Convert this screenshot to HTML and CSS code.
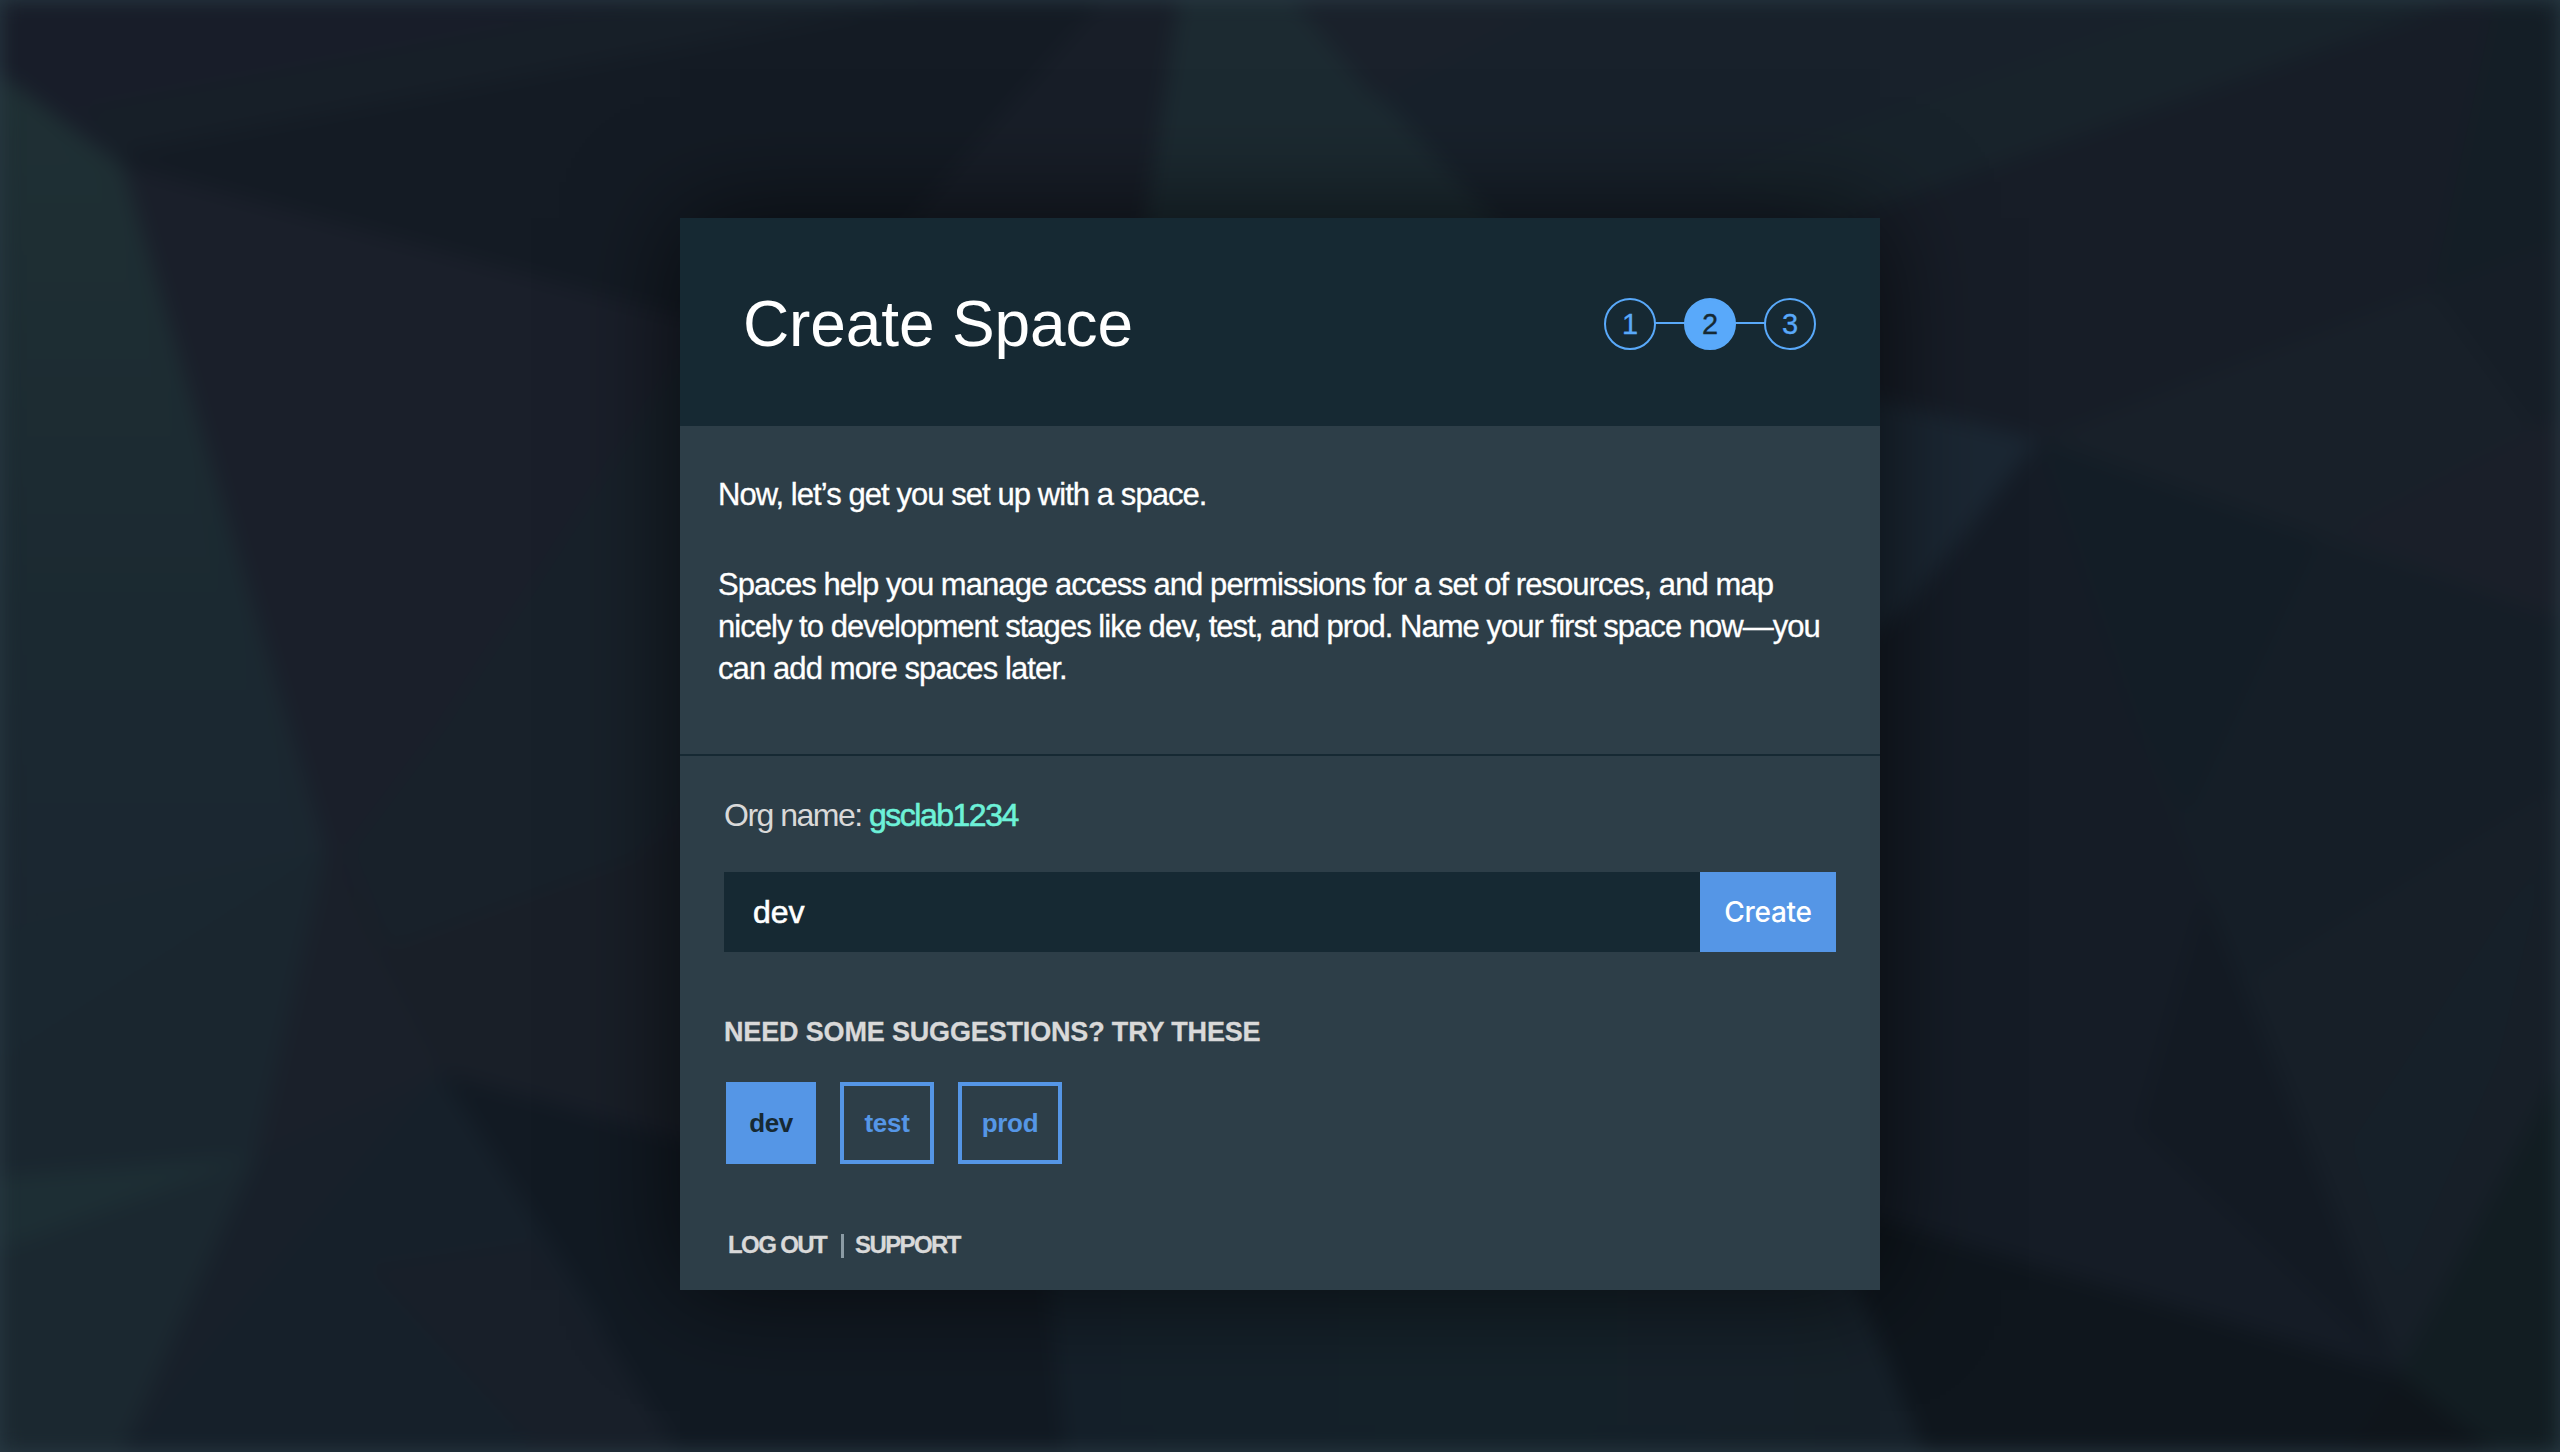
FILE: index.html
```html
<!DOCTYPE html>
<html lang="en">
<head>
<meta charset="utf-8">
<title>Create Space</title>
<link rel="stylesheet" href="styles.css">
</head>
<body>
<svg class="backdrop" viewBox="0 0 1568 889" preserveAspectRatio="none" aria-hidden="true">
  <defs>
    <linearGradient id="rim" x1="0" y1="0" x2="0" y2="1">
      <stop offset="0" stop-color="#1f3034"/><stop offset=".55" stop-color="#1b2931"/><stop offset="1" stop-color="#1b2530"/>
    </linearGradient>
    <linearGradient id="floor" x1="0" y1="0" x2="1" y2="0">
      <stop offset="0" stop-color="#15202a"/><stop offset=".5" stop-color="#15222a"/><stop offset="1" stop-color="#162029"/>
    </linearGradient>
  </defs>
  <rect width="1568" height="889" fill="#161e27"/>
  <polygon points="0,0 725,0 703,200 416,193 75,101 0,45" fill="#141b24"/>
  <polygon points="0,0 570,0 75,93 75,101 0,45" fill="#171f28"/>
  <polygon points="0,0 400,0 50,66 75,101 0,45" fill="#181d29"/>
  <polygon points="675,0 725,0 695,200 500,200" fill="#181e28"/>
  <polygon points="722,0 792,0 975,200 692,200" fill="#1c2a31"/>
  <polygon points="792,0 1508,0 1130,134 1130,200 975,200" fill="#18212b"/>
  <polygon points="792,0 960,0 842,60" fill="#1a212b"/>
  <polygon points="1508,0 1350,0 1040,110 1130,134" fill="#18232b"/>
  <polygon points="1508,0 1568,0 1568,147 1249,269 1130,240 1130,134" fill="#171d27"/>
  <polygon points="1528,0 1568,0 1568,147 1490,178" fill="#141e26"/>
  <polygon points="1249,269 1568,147 1568,380" fill="#182029"/>
  <polygon points="1489,177 1568,147 1568,285" fill="#161e27"/>
  <polygon points="1434,325 1568,255 1568,380" fill="#1a1f29"/>
  <polygon points="1130,240 1249,269 1168,372 1130,400" fill="#1b2733"/>
  <polygon points="1249,269 1568,380 1568,655 1469,841 1350,547 1309,444" fill="#151e27"/>
  <polygon points="1249,269 1420,330 1340,500 1309,444" fill="#131d26"/>
  <polygon points="1249,269 1309,444 1350,547 1469,841 1130,745 1130,400 1168,372" fill="#151c26"/>
  <polygon points="1377,600 1568,480 1568,655 1469,841" fill="#171f28"/>
  <polygon points="1440,700 1560,520 1530,650 1469,790" fill="#162029"/>
  <polygon points="1350,547 1310,690 1469,841" fill="#131a23"/>
  <polygon points="1568,655 1568,889 1529,889 1469,841" fill="#121d22"/>
  <polygon points="1130,740 1469,841 1439,889 1179,889 1130,770" fill="#0f161d"/>
  <polygon points="1469,841 1529,889 1439,889" fill="#0f151b"/>
  <polygon points="640,760 1125,760 1179,889 652,889" fill="url(#floor)"/>
  <polygon points="270,657 430,683 430,760 640,760 652,889 415,889" fill="#121a23"/>
  <polygon points="75,101 430,197 430,700 270,657 200,521" fill="#1a1f2a"/>
  <polygon points="416,220 430,220 430,480 270,657 213,521 270,445" fill="#18212a"/>
  <polygon points="200,521 240,580 430,510 430,690 270,657" fill="#191f28"/>
  <polygon points="0,45 75,101 200,521 0,650" fill="url(#rim)"/>
  <polygon points="0,570 200,521 0,650" fill="#1a2730"/>
  <polygon points="200,521 270,657 157,708 0,720 0,650" fill="#1a262f"/>
  <polygon points="200,521 270,657 157,708" fill="#1a202a"/>
  <polygon points="0,720 157,708 0,765" fill="#1d2e34"/>
  <polygon points="0,765 157,708 75,889 0,889" fill="#1b2830"/>
  <polygon points="157,708 270,657 415,889 75,889" fill="#18202a"/>
  <polygon points="195,745 270,657 370,812 340,889 75,889" fill="#16202a"/>
  <polygon points="225,775 330,889 415,889 330,760" fill="#181f29"/>
</svg>
<main class="card">
  <header class="card-header">
    <h1 class="title">Create Space</h1>
    <ol class="steps">
      <li class="step">1</li>
      <li class="step step-current">2</li>
      <li class="step">3</li>
    </ol>
  </header>
  <section class="intro">
    <p class="intro-text">Now, let’s get you set up with a space.</p>
    <p class="intro-text">Spaces help you manage access and permissions for a set of resources, and map <span class="tight">nicely to development stages like dev, test, and prod. Name your first space now—you</span> <span class="loose">can add more spaces later.</span></p>
  </section>
  <section class="form">
    <p class="org">Org name: <span class="org-name">gsclab1234</span></p>
    <div class="field">
      <input class="field-input" type="text" value="dev">
      <button class="field-button">Create</button>
    </div>
    <h2 class="hint">NEED SOME SUGGESTIONS? TRY THESE</h2>
    <div class="chips">
      <button class="chip chip-dev">dev</button>
      <button class="chip chip-test">test</button>
      <button class="chip chip-prod">prod</button>
    </div>
    <nav class="links">
      <a class="link">LOG OUT</a>
      <a class="link link-support">SUPPORT</a>
    </nav>
  </section>
</main>
</body>
</html>
```
FILE: styles.css
```css
* {
  box-sizing: border-box;
  margin: 0;
  padding: 0;
}

body {
  height: 1452px;
  overflow: hidden;
  background: #293a44;
  color: #fff;
  font-family: "Liberation Sans", Arial, sans-serif;
}

.backdrop {
  position: absolute;
  top: 0;
  left: 0;
  width: 2560px;
  height: 1452px;
  filter: blur(10px);
}

.card {
  position: relative;
  width: 1200px;
  height: 1072px;
  margin: 218px auto 0;
  background: #2d3e48;
  box-shadow: 0 0 100px rgba(0, 0, 0, .65);
}

.card-header {
  display: flex;
  align-items: center;
  justify-content: space-between;
  height: 208px;
  padding: 4px 64px 0 63px;
  background: #162933;
}

.title {
  font-size: 64px;
  font-weight: 400;
  letter-spacing: -.12px;
}

.steps {
  display: flex;
  gap: 28px;
  list-style: none;
}

.step {
  position: relative;
  width: 52px;
  height: 52px;
  border: 2px solid #59a9fa;
  border-radius: 50%;
  color: #59a9fa;
  font-size: 29px;
  line-height: 48px;
  text-align: center;
  -webkit-text-stroke: .3px currentColor;
}

.step + .step::before {
  content: "";
  position: absolute;
  top: 22px;
  right: 100%;
  width: 32px;
  height: 2px;
  background: #59a9fa;
}

.step-current {
  background: #59a9fa;
  color: #162933;
}

.intro {
  height: 328px;
  padding: 48px 40px 0 38px;
}

.intro-text {
  margin-bottom: 48px;
  font-size: 31px;
  line-height: 42px;
  letter-spacing: -.935px;
  -webkit-text-stroke: .3px currentColor;
}

.tight {
  letter-spacing: -.968px;
}

.loose {
  letter-spacing: -.9px;
}

.form {
  padding: 38px 44px 28px;
  border-top: 2px solid #162933;
}

.org {
  margin-bottom: 36px;
  color: #d9d9d9;
  font-size: 32px;
  line-height: 42px;
  letter-spacing: -1.5px;
}

.org-name {
  color: #6df1d8;
  -webkit-text-stroke: .6px currentColor;
}

.field {
  display: flex;
  height: 80px;
  margin-bottom: 60px;
}

.field-input {
  flex: 1;
  padding-left: 29px;
  border: 0;
  outline: 0;
  background: #162933;
  color: #fff;
  font: 32px "Liberation Sans", Arial, sans-serif;
  -webkit-text-stroke: .6px currentColor;
}

.field-button {
  width: 136px;
  border: 0;
  background: #5596e6;
  color: #fff;
  font: 500 28px Inter, sans-serif;
  letter-spacing: -.3px;
}

.hint {
  margin-bottom: 30px;
  color: #d9d9d9;
  font-size: 27px;
  line-height: 40px;
  letter-spacing: -.16px;
  -webkit-text-stroke: .3px currentColor;
}

.chips {
  display: flex;
  gap: 24px;
  margin: 0 0 65px 2px;
}

.chip {
  height: 82px;
  border: 4px solid #5596e6;
  background: transparent;
  color: #5596e6;
  font: 700 26px "Liberation Sans", Arial, sans-serif;
  letter-spacing: -.3px;
}

.chip-dev {
  width: 90px;
  background: #5596e6;
  color: #162933;
  letter-spacing: -.5px;
}

.chip-test {
  width: 94px;
}

.chip-prod {
  width: 104px;
}

.links {
  display: flex;
  align-items: center;
  padding-left: 4px;
  color: #d9d9d9;
  font-size: 24px;
  font-weight: 700;
  line-height: 32px;
  -webkit-text-stroke: .3px currentColor;
}

.link {
  width: 112px;
  letter-spacing: -1.6px;
}

.link-support {
  display: flex;
  align-items: center;
  width: auto;
}

.link-support::before {
  content: "";
  width: 3px;
  height: 24px;
  margin: 2px 11px 0 1px;
  background: #8b9ba4;
}
```
